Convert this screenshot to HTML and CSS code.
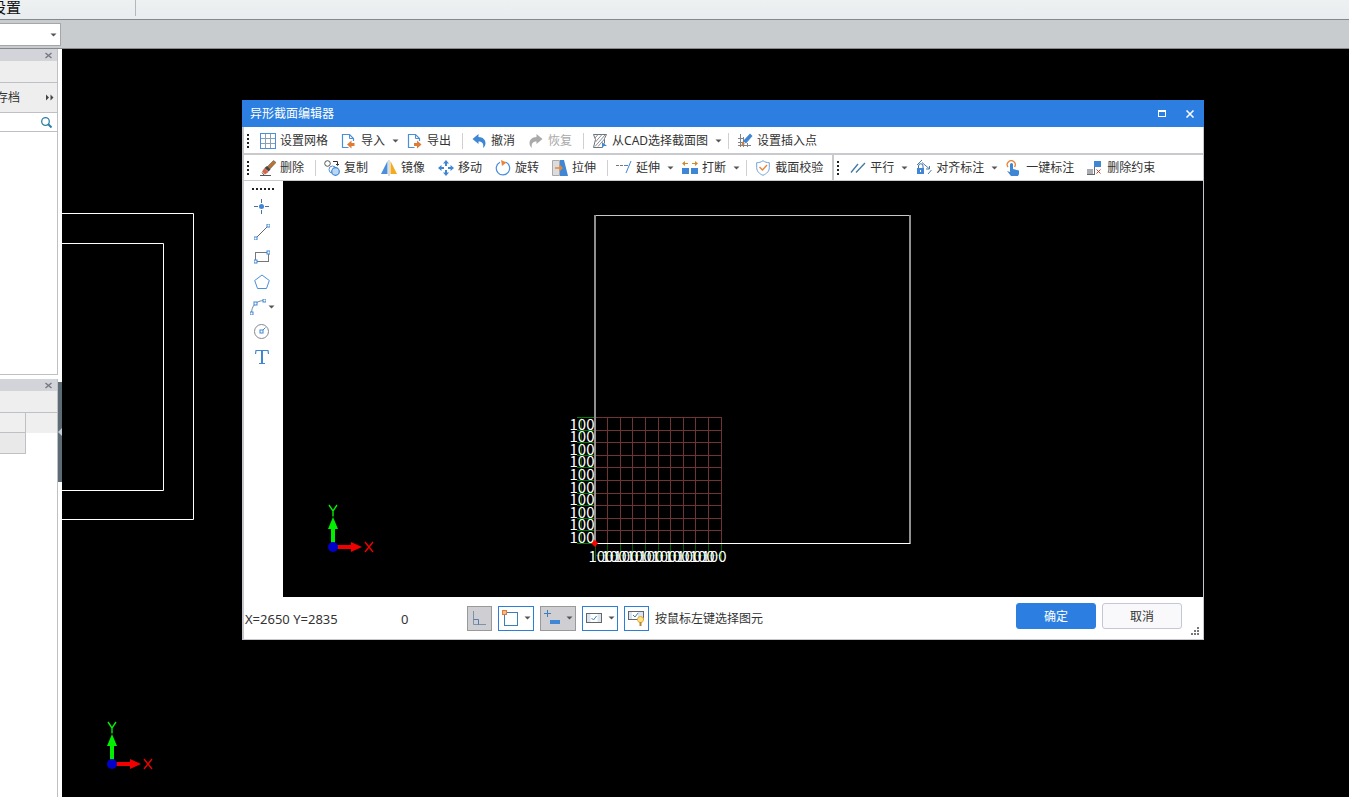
FILE: index.html
```html
<!DOCTYPE html>
<html lang="zh-CN">
<head>
<meta charset="utf-8">
<title>异形截面编辑器</title>
<link rel="stylesheet" href="styles.css">
</head>
<body>
<svg class="defs" width="0" height="0" aria-hidden="true">
  <defs>
    <g id="caret"><path d="M1.500 2.500h6L4.500 5.500z" fill="#555"/></g>
    <g id="page"><path d="M7.500 14.500H1.500v-13H8.500L12.500 5.500V8" fill="#fff" stroke="#4a8fd8" stroke-width="1.200"/><path d="M8.500 1.500v4h4" fill="none" stroke="#4a8fd8"/></g>
    <g id="node"><rect x="-1.500" y="-1.500" width="3" height="3" fill="#fff" stroke="#3f86d4"/></g>
    <g id="axes">
      <path d="M5 36V17" stroke="#00f000" stroke-width="4"/>
      <path d="M5 7L10 19H0z" fill="#00f000"/>
      <path d="M9 37h17" stroke="#f00000" stroke-width="4"/>
      <path d="M34 37L23 32v10z" fill="#f00000"/>
      <circle cx="5" cy="37" r="5" fill="#0000c8"/>
      <path d="M1 -5L5 1L9 -5M5 1V6.500" fill="none" stroke="#00f000" stroke-width="1.400"/>
      <path d="M37 32l8 10M45 32l-8 10" fill="none" stroke="#f00000" stroke-width="1.400"/>
    </g>
  </defs>
</svg>

<header class="ribbon">
  <div class="ribbon-group"><span class="ribbon-label">设置</span></div>
</header>
<div class="optionbar">
  <button class="combo" aria-label="选择"><svg width="8" height="8"><use href="#caret"/></svg></button>
</div>

<main class="workspace">
  <aside class="sidebar">
    <section class="panel panel-top">
      <div class="panel-head"><button class="panel-close" aria-label="关闭"><svg width="7" height="7"><path d="M.5 1l6 5M6.500 1l-6 5" stroke="#777b80" stroke-width="1.500"/></svg></button></div>
      <div class="panel-strip"></div>
      <div class="panel-actions">
        <button class="archive">存档</button>
        <button class="more" aria-label="更多"><svg width="8" height="7"><path d="M0 .5L3 3.500 0 6.500zM4.500 .5L7.500 3.500 4.500 6.500z" fill="#444"/></svg></button>
      </div>
      <div class="search">
        <input class="search-input" type="text" aria-label="搜索">
        <svg width="11" height="11"><circle cx="4.500" cy="4.500" r="3.800" fill="none" stroke="#2d7fa8" stroke-width="1.300"/><path d="M7 7l3.500 3.500" stroke="#2d7fa8" stroke-width="2"/></svg>
      </div>
      <div class="panel-list"></div>
    </section>
    <section class="panel panel-bottom">
      <div class="panel-head"><button class="panel-close" aria-label="关闭"><svg width="7" height="7"><path d="M.5 1l6 5M6.500 1l-6 5" stroke="#777b80" stroke-width="1.500"/></svg></button></div>
      <div class="panel-strip"></div>
      <div class="prop-row prop-head"><div class="prop-cell"></div></div>
      <div class="prop-row"><div class="prop-cell prop-cell-alt"></div></div>
    </section>
  </aside>
  <div class="splitter"><button class="splitter-handle" aria-label="折叠"><svg width="4" height="8"><path d="M4 0v8L0 4z" fill="#c4ccd0"/></svg></button></div>

  <div class="viewport">
    <svg class="drawing" width="100%" height="100%">
      <path d="M0 164.500H131.500V470.500H0M0 194.500H101.500V441.500H0" fill="none" stroke="#fff"/>
      <use href="#axes" x="45" y="678"/>
    </svg>

    <section class="dialog" role="dialog" aria-labelledby="dlg-title">
      <header class="titlebar">
        <h1 class="title" id="dlg-title">异形截面编辑器</h1>
        <button class="winbtn" aria-label="最大化"><svg width="8" height="7"><path d="M0 0h8v7H0zM1 2v4h6V2z" fill="#fff" fill-rule="evenodd"/></svg></button>
        <button class="winbtn" aria-label="关闭"><svg width="8" height="8"><path d="M.5 .5l7 7M7.500 .5l-7 7" stroke="#fff" stroke-width="1.500"/></svg></button>
      </header>

      <nav class="toolrow">
        <div class="toolbar">
          <span class="grip"></span>
          <button class="tool"><svg width="16" height="16"><rect x=".5" y=".5" width="15" height="15" fill="#fff" stroke="#4a8fd8"/><path d="M5.500 1v14M10.500 1v14M1 5.500h14M1 10.500h14" stroke="#8aa0b4"/></svg>设置网格</button>
          <button class="tool drop"><svg width="16" height="16"><use href="#page"/><path d="M6 11.500l4.500-4V10h3v3h-3v2.500z" fill="#e07a35"/></svg>导入<svg class="caret" width="8" height="8"><use href="#caret"/></svg></button>
          <button class="tool"><svg width="16" height="16"><use href="#page"/><path d="M14.500 11.500l-4.500-4V10H7v3h3v2.500z" fill="#e07a35"/></svg>导出</button>
          <span class="sep"></span>
          <button class="tool"><svg width="16" height="16"><path d="M1.500 6L7.500 1v3c4.500 0 7 3 7 6 0 2-1 4-2.500 5 1-4-.5-6.500-4.500-6.500V11z" fill="#3f86d4"/></svg>撤消</button>
          <button class="tool" disabled><svg width="16" height="16"><path d="M14.500 6L8.500 1v3C4 4 1.500 7 1.500 10c0 2 1 4 2.500 5-1-4 .5-6.500 4.500-6.500V11z" fill="#aaa"/></svg>恢复</button>
          <span class="sep"></span>
          <button class="tool drop"><svg width="16" height="16"><path d="M1.500 1.500h13l-2 4v5M1.500 1.500l2 5-2 8h9" fill="none" stroke="#6d737a"/><path d="M3 5l3-3.500M3.500 9L10 1.500M3 13.500L13 2M6 13.500L12.500 6" stroke="#8a9097"/><path d="M10 9l5 4h-3l-2 2z" fill="#3f86d4"/></svg>从CAD选择截面图<svg class="caret" width="8" height="8"><use href="#caret"/></svg></button>
          <span class="sep"></span>
          <button class="tool"><svg width="16" height="16"><path d="M3.500 1v13M6.500 4v10M10.500 10v4M1 5.500h6M1 9.500h5M1 12.500h13" fill="none" stroke="#7d838a"/><path d="M13 .5l2.500 2.500L9 10.500 6 8z" fill="#3f86d4"/><path d="M5.500 8.500L8 11l-4 2z" fill="#e07a35"/></svg>设置插入点</button>
        </div>
      </nav>

      <nav class="toolrow">
        <div class="toolbar toolbar-split">
          <span class="grip"></span>
          <button class="tool"><svg width="16" height="16"><path d="M13.500 .5L16 2.500 9.500 9.500 7 7z" fill="#b8733c" stroke="#5b4634" stroke-width=".5"/><path d="M7 6l3.500 3.500-2 2L4.500 8z" fill="#444"/><path d="M4.500 8L8.500 12 5 14.500 2 11.500z" fill="#d06a4a"/><path d="M0 15.500h11M2 12.500L4 15" stroke="#555"/></svg>删除</button>
          <span class="sep"></span>
          <button class="tool"><svg width="16" height="16"><circle cx="3.500" cy="3.500" r="2.800" fill="#fff" stroke="#555"/><path d="M9 1.500h4.500V5M12 4l1.500 1.500L15 4" fill="none" stroke="#333"/><circle cx="8.500" cy="9.500" r="3.500" fill="#fff" stroke="#4a8fd8"/><circle cx="11.500" cy="11.500" r="3.800" fill="#b9d8f5" stroke="#3f86d4" stroke-width="1.200"/></svg>复制</button>
          <button class="tool"><svg width="16" height="16"><path d="M6.500 1v13H0z" fill="#4a8fd8"/><path d="M9.500 1v13h6.500z" fill="#f2ac23"/><path d="M8 0v16" stroke="#bbb"/></svg>镜像</button>
          <button class="tool"><svg width="16" height="16"><path d="M8 0l3 3.500H9V6H7V3.500H5zM8 16l3-3.500H9V10H7v2.500H5zM0 8l3.500-3v2H6v2H3.500v2zM16 8l-3.500-3v2H10v2h2.500v2z" fill="#3f86d4"/></svg>移动</button>
          <button class="tool"><svg width="16" height="16"><path d="M10.500 2A6.700 6.700 0 1 1 5 2.200" fill="none" stroke="#4a8fd8" stroke-width="1.200"/><path d="M6 0l5.500 2.500L7 6z" fill="#e8863a"/></svg>旋转</button>
          <button class="tool"><svg width="16" height="16"><path d="M.5 .5h7v15h-7z" fill="#dcdcdf" stroke="#aaa"/><path d="M8 0h4l4 16H8z" fill="#3f86d4"/><path d="M3 8h7M7.500 5.500L10 8 7.500 10.500" fill="none" stroke="#e8863a" stroke-width="1.300"/></svg>拉伸</button>
          <span class="sep"></span>
          <button class="tool drop"><svg width="16" height="16"><path d="M0 5.500h9" stroke="#777" stroke-dasharray="3 1"/><path d="M9 5.500h3" stroke="#3f86d4"/><path d="M15 1l-5 12" stroke="#3f86d4"/></svg>延伸<svg class="caret" width="8" height="8"><use href="#caret"/></svg></button>
          <button class="tool drop"><svg width="16" height="16"><path d="M0 8h7v6H0zM9 8h7v6H9z" fill="#3f86d4"/><path d="M0 3.500L3 1v2h3v1H3v2zM16 3.500L13 1v2h-3v1h3v2z" fill="#d28b2c"/></svg>打断<svg class="caret" width="8" height="8"><use href="#caret"/></svg></button>
          <span class="sep"></span>
          <button class="tool"><svg width="16" height="16"><path d="M8 .7c2 1.500 4 2 6.300 2v5c0 3.500-2.500 6-6.300 7.600C4.200 13.700 1.700 11.200 1.700 7.700v-5C4 2.700 6 2.200 8 .7z" fill="#fff" stroke="#6fa3da"/><path d="M4.500 7l3 3 4.500-5" fill="none" stroke="#e8863a" stroke-width="1.400"/></svg>截面校验</button>
        </div>
        <div class="toolbar">
          <span class="grip"></span>
          <button class="tool drop"><svg width="16" height="16"><path d="M1 12.500L8 4M6 12.500L15 3" stroke="#45789f" stroke-width="1.300"/></svg>平行<svg class="caret" width="8" height="8"><use href="#caret"/></svg></button>
          <button class="tool drop"><svg width="16" height="16"><path d="M2.500 8V6a2.200 2.200 0 0 1 4.500 0v2" fill="none" stroke="#3f6f9f"/><rect x="1" y="8" width="7" height="6" fill="#3f86d4"/><path d="M4 10h1v2H4z" fill="#fff"/><path d="M1 5L6 0M6 2.500l7 6M12 14l3.500-4M10 9h3.500V6" fill="none" stroke="#4d7da8"/></svg>对齐标注<svg class="caret" width="8" height="8"><use href="#caret"/></svg></button>
          <button class="tool"><svg width="16" height="16"><path d="M2 7a4 4 0 1 1 6.500 0" fill="none" stroke="#e8863a" stroke-width="1.300"/><path d="M4 4.500a1.200 1.200 0 0 1 3 0V9l6 1.500V14l-1 2H5L1 11l3 1z" fill="#3f86d4"/></svg>一键标注</button>
          <button class="tool"><svg width="16" height="16"><path d="M0 9h6v5H0z" fill="#a9adb2"/><path d="M7.500 1v14M0 14.500h8" stroke="#666"/><path d="M7 1h7v6H7z" fill="#3f86d4"/><path d="M9.500 9.500l4 4M13.500 9.500l-4 4" stroke="#d0402c"/></svg>删除约束</button>
        </div>
      </nav>

      <div class="editor">
        <nav class="palette">
          <span class="grip-h"></span>
          <button class="shape" aria-label="点"><svg width="16" height="16"><path d="M7.500 0v4M7.500 11v4M0 7.500h4M11 7.500h4" stroke="#52708f"/><circle cx="7.500" cy="7.500" r="2.500" fill="#3f86d4"/></svg></button>
          <button class="shape" aria-label="直线"><svg width="16" height="16"><path d="M1.500 14.500l13-13" stroke="#666"/><use href="#node" x="1.500" y="14.500"/><use href="#node" x="14.500" y="1.500"/></svg></button>
          <button class="shape" aria-label="矩形"><svg width="16" height="16"><rect x="1.500" y="3.500" width="13" height="9" fill="none" stroke="#777"/><use href="#node" x="1.500" y="12.500"/><use href="#node" x="14.500" y="3.500"/></svg></button>
          <button class="shape" aria-label="多边形"><svg width="16" height="16"><path d="M8 1l7.300 5.500L12.500 14.500h-9L.7 6.500z" fill="none" stroke="#4a8fd8"/></svg></button>
          <button class="shape shape-drop" aria-label="弧线"><svg width="16" height="16"><path d="M1.500 14.500C1.500 7 6 1.500 14.500 1.500" fill="none" stroke="#6d89a5"/><use href="#node" x="1.500" y="14.500"/><use href="#node" x="5.500" y="4.500"/><use href="#node" x="14.500" y="1.500"/></svg><svg class="caret" width="8" height="8"><use href="#caret"/></svg></button>
          <button class="shape" aria-label="圆"><svg width="16" height="16"><circle cx="7.500" cy="7.500" r="7" fill="none" stroke="#85898e"/><path d="M7.500 7.500l4-4" stroke="#3f86d4"/><use href="#node" x="7.500" y="7.500"/></svg></button>
          <button class="shape" aria-label="文字"><svg width="16" height="16"><path d="M1.500 5L2 1.500h12L14.500 5M5 14.500h6" fill="none" stroke="#3f86d4" stroke-width="1.200"/><path d="M8 1.500v13" stroke="#3f86d4" stroke-width="2"/></svg></button>
        </nav>
        <svg class="section" id="section" width="100%" height="100%">
          <g id="grid" fill="none"></g>
          <path d="M312 34.500h315" stroke="#c8c8c8"/>
          <path d="M627 34v329" stroke="#909090" stroke-width="2"/>
          <path d="M312 34v329" stroke="#909090" stroke-width="2"/>
          <path d="M312 362.500h315" stroke="#fff"/>
          <path d="M308 362l4-3 3 3-3 4z" fill="#f00"/>
          <g id="dims" class="dims"></g>
          <use href="#axes" x="45" y="329"/>
        </svg>
      </div>

      <footer class="statusbar">
        <span class="coords">X=2650 Y=2835</span>
        <span class="angle">0</span>
        <div class="modes">
          <button class="mode mode-single mode-on" aria-label="正交"><svg width="16" height="16"><path d="M2.500 1v13.500H15" fill="none" stroke="#7c92a6"/><path d="M2.500 9.500h5v5" fill="none" stroke="#4f7fb0"/></svg></button>
          <button class="mode" aria-label="捕捉"><svg width="16" height="16"><rect x="2.500" y="2.500" width="13" height="13" fill="#fff" stroke="#3f7fb8"/><rect x=".5" y=".5" width="4" height="4" fill="#f5b98c" stroke="#e07a35"/></svg><svg width="8" height="8"><use href="#caret"/></svg></button>
          <button class="mode mode-on" aria-label="动态输入"><svg width="16" height="16"><path d="M3.500 0v7M0 3.500h7" stroke="#3f7fb8"/><rect x="6" y="10" width="10" height="4" fill="#3f86d4"/></svg><svg width="8" height="8"><use href="#caret"/></svg></button>
          <button class="mode" aria-label="显示"><svg width="16" height="16"><rect x=".5" y="3.500" width="15" height="9" fill="#d9e6f0" stroke="#666"/><path d="M4.500 4h7v8h-7z" fill="#fff"/><path d="M5.500 8l2 2 3-4" fill="none" stroke="#3f7fb8"/></svg><svg width="8" height="8"><use href="#caret"/></svg></button>
          <button class="mode mode-single" aria-label="提示"><svg width="16" height="16"><rect x=".5" y="1.500" width="15" height="8" fill="#d9e6f0" stroke="#666"/><path d="M4 2h6v7H4z" fill="#fff"/><path d="M5 5l2 2 3-4" fill="none" stroke="#3f7fb8"/><circle cx="12.500" cy="9.500" r="3" fill="#ffe584" stroke="#e0a93a"/><path d="M11.500 12v4h2v-4z" fill="#b9822c"/></svg></button>
        </div>
        <span class="hint">按鼠标左键选择图元</span>
        <div class="actions">
          <button class="btn btn-primary">确定</button>
          <button class="btn">取消</button>
        </div>
        <svg class="resizer" width="8" height="8"><path d="M6 0h2v2H6zM3 3h2v2H3zM6 3h2v2H6zM0 6h2v2H0zM3 6h2v2H3zM6 6h2v2H6z" fill="#777"/></svg>
      </footer>
    </section>
  </div>
</main>
<script src="section.js"></script>
</body>
</html>
```

FILE: section.js
```js
const NS = 'http://www.w3.org/2000/svg';
const grid = document.getElementById('grid');
const dims = document.getElementById('dims');
const origin = { x: 312, y: 362 };
const step = 12.6;
const count = 10;

function line(x1, y1, x2, y2, color) {
  const el = document.createElementNS(NS, 'path');
  el.setAttribute('d', `M${x1} ${y1}L${x2} ${y2}`);
  el.setAttribute('stroke', color);
  grid.appendChild(el);
}

function label(x, y) {
  const el = document.createElementNS(NS, 'text');
  el.setAttribute('x', x);
  el.setAttribute('y', y);
  el.textContent = '100';
  dims.appendChild(el);
}

const size = step * count;
for (let i = 0; i <= count; i++) {
  const x = Math.floor(origin.x + i * step) + 0.5;
  const y = Math.round(origin.y - i * step) + 0.5;
  line(x, origin.y, x, origin.y - size, '#703434');
  line(origin.x, y, origin.x + size, y, '#703434');
  line(x, origin.y + 1, x, origin.y + 18, '#006000');
  line(origin.x - 18, y, origin.x, y, '#008000');
}
line(origin.x - 13.5, origin.y, origin.x - 13.5, origin.y - size, '#006000');
line(origin.x, origin.y + 12.5, origin.x + size, origin.y + 12.5, '#006000');

for (let i = 0; i < count; i++) {
  label(origin.x - 13, Math.round(origin.y - i * step));
  label(Math.round(origin.x + 6 + i * step), origin.y + 19);
}
```

FILE: styles.css
```css
* { box-sizing: border-box; }

body {
  margin: 0;
  height: 100vh;
  display: flex;
  flex-direction: column;
  overflow: hidden;
  background: #fff;
  color: #333;
  font: 12px/16px "Noto Sans", "Noto Sans CJK SC", sans-serif;
}

button {
  margin: 0;
  padding: 0;
  border: 0;
  background: none;
  color: inherit;
  font: inherit;
}

svg { display: block; flex: none; }
.defs { position: absolute; }

.ribbon {
  flex: none;
  height: 20px;
  display: flex;
  background: linear-gradient(#eef1f2, #e8ecee);
  border-bottom: 1px solid #85898c;
}
.ribbon-group {
  width: 136px;
  height: 16px;
  border-right: 1px solid #b4b8ba;
}
.ribbon-label {
  width: 21px;
  display: flex;
  justify-content: flex-end;
  overflow: hidden;
  color: #111;
  font-size: 15px;
  line-height: 15px;
  white-space: nowrap;
}

.optionbar {
  flex: none;
  height: 29px;
  padding: 3px 0;
  background: #c8cccf;
  border-bottom: 1px solid #85898c;
}
.combo {
  width: 61px;
  height: 23px;
  padding-right: 3px;
  display: flex;
  align-items: center;
  justify-content: flex-end;
  background: #fff;
  border: 1px solid #a3a7aa;
  border-left: 0;
}

.workspace { flex: 1; min-height: 0; display: flex; }

.sidebar {
  width: 58px;
  display: flex;
  flex-direction: column;
  gap: 4px;
}
.panel {
  display: flex;
  flex-direction: column;
  border-right: 1px solid #bdc0c4;
}
.panel-top { height: 326px; border-bottom: 1px solid #bdc0c4; }
.panel-bottom { flex: 1; }
.panel-head {
  height: 12px;
  padding-right: 5px;
  display: flex;
  align-items: center;
  justify-content: flex-end;
  background: #d2d4d9;
}
.panel-strip {
  height: 22px;
  background: #eeeeef;
  border-bottom: 1px solid #bdc0c4;
}
.panel-actions {
  height: 30px;
  padding-right: 3px;
  display: flex;
  align-items: center;
  justify-content: space-between;
  background: #eeeeef;
  border-bottom: 1px solid #bdc0c4;
}
.archive {
  width: 20px;
  display: flex;
  justify-content: flex-end;
  overflow: hidden;
  white-space: nowrap;
}
.search {
  height: 19px;
  padding-right: 5px;
  display: flex;
  align-items: center;
  border-bottom: 1px solid #bdc0c4;
}
.search-input {
  flex: 1;
  min-width: 0;
  padding: 0;
  border: 0;
  outline: 0;
}
.prop-row { height: 20px; }
.prop-head { background: #efefef; }
.prop-cell {
  width: 26px;
  height: 20px;
  background: #efefef;
  border-right: 1px solid #bdc0c4;
  border-bottom: 1px solid #bdc0c4;
}
.prop-cell-alt { height: 21px; background: #e9e9e9; }

.splitter { width: 4px; padding-top: 333px; }
.splitter-handle {
  width: 4px;
  height: 100px;
  display: flex;
  align-items: center;
  background: #5d6b74;
}

.viewport { flex: 1; min-width: 0; position: relative; background: #000; }
.drawing { position: absolute; inset: 0; }

.dialog {
  position: absolute;
  top: 51px;
  right: 145px;
  bottom: 157px;
  left: 180px;
  display: flex;
  flex-direction: column;
  background: #fff;
  border: solid #c6c7cc;
  border-width: 0 1px 1px 2px;
}
.titlebar {
  flex: none;
  height: 27px;
  margin: 0 -1px 0 -2px;
  padding: 0 0 0 8px;
  display: flex;
  align-items: center;
  background: #2c7fe0;
  color: #fff;
}
.title { flex: 1; margin: 0; font-size: 12px; font-weight: 400; }
.winbtn {
  width: 28px;
  height: 27px;
  display: flex;
  align-items: center;
  justify-content: center;
}

.toolrow {
  flex: none;
  height: 28px;
  padding-top: 2px;
  display: flex;
  border-bottom: 2px solid #c9cacd;
}
.toolrow + .toolrow { height: 26px; padding-top: 0; border-bottom-width: 1px; }
.toolbar { display: flex; align-items: center; padding-left: 3px; }
.toolbar-split { padding-right: 2px; border-right: 2px solid #c9cacd; }
.grip {
  width: 2px;
  height: 14px;
  margin-right: 5px;
  background: repeating-linear-gradient(#222 0 2px, transparent 2px 4px);
}
.tool {
  height: 24px;
  padding: 0 7px 0 6px;
  display: flex;
  align-items: center;
  gap: 4px;
  white-space: nowrap;
}
.tool:disabled { color: #a9a9a9; }
.drop { padding-right: 2px; }
.tool .caret { margin-left: 2px; }
.sep { width: 1px; height: 16px; margin: 0 2px 0 4px; background: #d0d0d0; }

.editor { flex: 1; min-height: 0; display: flex; background: #000; }
.palette {
  width: 39px;
  padding-top: 7px;
  display: flex;
  flex-direction: column;
  background: #fff;
}
.grip-h {
  width: 22px;
  height: 2px;
  margin: 0 0 4px 8px;
  background: repeating-linear-gradient(90deg, #222 0 2px, transparent 2px 4px);
}
.shape {
  height: 25px;
  padding-left: 10px;
  display: flex;
  align-items: center;
}
.shape-drop { padding-left: 6px; gap: 1px; }
.section { flex: 1; min-width: 0; }
.dims {
  fill: #fff;
  font: 400 15px "Noto Sans CJK SC", sans-serif;
  text-anchor: middle;
}

.statusbar {
  position: relative;
  flex: none;
  height: 42px;
  padding: 0 21px 0 1px;
  display: flex;
  align-items: center;
}
.coords { width: 156px; }
.angle { width: 66px; }
.coords, .angle { font-size: 13px; }
.coords, .angle, .hint { padding-top: 2px; }
.modes { display: flex; gap: 6px; }
.mode {
  width: 36px;
  height: 25px;
  padding: 0 2px 0 3px;
  display: flex;
  align-items: center;
  justify-content: space-between;
  border: 1px solid #2c7fd8;
  background: #fff;
}
.mode-single { width: 25px; }
.mode-on { border-color: #999; background: #cfcfd3; }
.hint { margin-left: 6px; }
.actions { margin: 0 0 4px auto; display: flex; gap: 6px; }
.btn {
  width: 80px;
  height: 26px;
  padding-top: 1px;
  border: 1px solid #c3c7d6;
  border-radius: 3px;
  background: #f9f9fb;
}
.btn-primary { border-color: #2c7fe0; background: #2c7fe0; color: #fff; }
.resizer { position: absolute; right: 4px; bottom: 4px; }
```
